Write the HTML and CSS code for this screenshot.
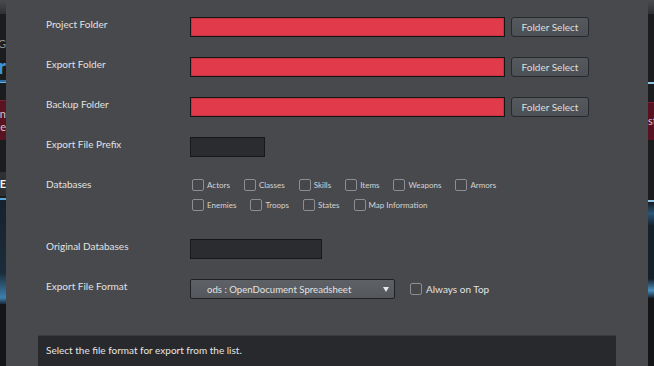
FILE: index.html
```html
<!DOCTYPE html>
<html>
<head>
<meta charset="utf-8">
<link rel="stylesheet" href="styles.css">
</head>
<body>
<div class="screen">
  <div class="side side-left">
    <div class="b b-top"></div>
    <div class="b b-dark h22"></div>
    <div class="b b-dark h16 frag-g"><span>G</span></div>
    <div class="b b-dark h28 frag-blue"><span>r</span></div>
    <div class="b b-line"></div>
    <div class="b b-dark h17"></div>
    <div class="b b-red frag-red"><span>n</span><span>e</span></div>
    <div class="b b-dark h32"></div>
    <div class="b b-gray frag-e"><span>E</span></div>
    <div class="b b-line2"></div>
    <div class="b b-glow"></div>
    <div class="b b-black"></div>
  </div>

  <div class="dialog">
    <div class="row r-folder">
      <div class="label">Project Folder</div>
      <div class="field-red"></div>
      <div class="btn">Folder Select</div>
    </div>
    <div class="row r-folder">
      <div class="label">Export Folder</div>
      <div class="field-red"></div>
      <div class="btn">Folder Select</div>
    </div>
    <div class="row r-folder">
      <div class="label">Backup Folder</div>
      <div class="field-red"></div>
      <div class="btn">Folder Select</div>
    </div>
    <div class="row r-prefix">
      <div class="label">Export File Prefix</div>
      <div class="field-dark w-prefix"></div>
    </div>
    <div class="row r-db">
      <div class="label">Databases</div>
      <div class="checks">
        <div class="check-line">
          <div class="check"><span class="cb"></span><span>Actors</span></div>
          <div class="check"><span class="cb"></span><span>Classes</span></div>
          <div class="check"><span class="cb"></span><span>Skills</span></div>
          <div class="check"><span class="cb"></span><span>Items</span></div>
          <div class="check"><span class="cb"></span><span>Weapons</span></div>
          <div class="check"><span class="cb"></span><span>Armors</span></div>
        </div>
        <div class="check-line">
          <div class="check"><span class="cb"></span><span>Enemies</span></div>
          <div class="check"><span class="cb"></span><span>Troops</span></div>
          <div class="check"><span class="cb"></span><span>States</span></div>
          <div class="check"><span class="cb"></span><span>Map Information</span></div>
        </div>
      </div>
    </div>
    <div class="row r-orig">
      <div class="label">Original Databases</div>
      <div class="field-dark w-orig"></div>
    </div>
    <div class="row r-format">
      <div class="label">Export File Format</div>
      <div class="select">
        <span class="select-text">ods : OpenDocument Spreadsheet</span>
        <span class="arrow"></span>
      </div>
      <div class="check top-check"><span class="cb"></span><span>Always on Top</span></div>
    </div>
    <div class="desc">Select the file format for export from the list.</div>
  </div>

  <div class="side side-right">
    <div class="b b-top"></div>
    <div class="b b-dark h68"></div>
    <div class="b b-line-r"></div>
    <div class="b b-dark h18"></div>
    <div class="b b-red-r frag-st"><span>st</span></div>
    <div class="b b-dark h60"></div>
    <div class="b b-line-r"></div>
    <div class="b b-glow-r"></div>
    <div class="b b-black"></div>
  </div>
</div>
</body>
</html>
```

FILE: styles.css
```css
* { box-sizing: border-box; }
html, body { margin: 0; padding: 0; }
body {
  width: 654px;
  height: 366px;
  overflow: hidden;
  background: #151618;
  font-family: Lato, "Liberation Sans", sans-serif;
  color: #e4e4e4;
}
.screen {
  display: flex;
  width: 654px;
  height: 366px;
}

/* background application strips */
.side {
  width: 6px;
  flex: none;
  display: flex;
  flex-direction: column;
  overflow: hidden;
}
.b { flex: none; overflow: hidden; white-space: nowrap; }
.b-top { height: 14px; background: linear-gradient(#4a4b4e, #2f3032); }
.b-dark { background: #1b1c1e; }
.h16 { height: 16px; }
.h17 { height: 17px; }
.h18 { height: 18px; }
.h22 { height: 22px; }
.h28 { height: 28px; }
.h32 { height: 32px; }
.h60 { height: 60px; }
.h68 { height: 68px; }
.b-line { height: 3px; background: #2f6d9e; border-bottom: 1px solid #62b1ea; }
.b-line2 { height: 4px; background: #1b1c1e; border-bottom: 2px solid #5aa6dc; }
.b-line-r { height: 2px; background: #8cc2e2; }
.b-red { height: 40px; background: #5a1320; border-top: 1px solid #7a2030; }
.b-red-r { height: 38px; background: #561220; border-top: 1px solid #7a2030; }
.b-gray { height: 24px; background: #2e3034; }
.b-glow {
  height: 104px;
  background: linear-gradient(#16222d 0%, #1c2c3a 70%, #3e7fae 94%, #1a2a38 100%);
}
.b-glow-r {
  height: 96px;
  background: linear-gradient(#1a1b1d 0%, #2a5576 12%, #16202a 25%, #16202a 80%, #4a8fbd 92%, #18222c 100%);
}
.b-black { flex: 1; background: #141516; }

.side-left .b { display: flex; flex-direction: column; align-items: flex-end; }
.frag-g span { font-size: 11px; color: #8d8f92; line-height: 16px; }
.frag-blue span { font-size: 20px; color: #3f93d8; line-height: 28px; font-weight: 700; }
.frag-red span { font-size: 11px; color: #d8c4c6; line-height: 13px; }
.frag-red { padding-top: 6px; }
.frag-e span { font-size: 11px; color: #f2f2f2; font-weight: 700; line-height: 24px; }
.frag-st span { font-size: 11px; color: #d8c4c6; line-height: 36px; }

/* dialog */
.dialog {
  width: 642px;
  flex: none;
  background: #47494c;
  padding: 17px 0 0 40px;
  font-size: 10px;
  display: flex;
  flex-direction: column;
}
.row {
  display: flex;
  align-items: flex-start;
  flex: none;
}
.label {
  width: 144px;
  flex: none;
  line-height: 14px;
  color: #e2e2e2;
}
.r-folder, .r-prefix { margin-bottom: 20px; }
.r-db { margin-bottom: 24px; }
.r-orig { margin-bottom: 20px; }
.r-format { margin-bottom: 36px; }

.field-red {
  width: 315px;
  height: 20px;
  background: #e03a4b;
  border: 1px solid #161616;
  box-shadow: inset 0 0 0 1px #c8323f;
}
.btn {
  margin-left: 6px;
  width: 78px;
  height: 20px;
  border: 1px solid #27292b;
  border-radius: 3px;
  background: linear-gradient(#56595d, #4d5054);
  color: #dedede;
  display: flex;
  align-items: center;
  justify-content: center;
  line-height: 1;
}
.field-dark {
  height: 20px;
  background: #2a2c2f;
  border: 1px solid #17181a;
}
.w-prefix { width: 75px; }
.w-orig { width: 132px; }

.checks {
  margin-top: -2px;
  padding-left: 2px;
  display: flex;
  flex-direction: column;
}
.check-line {
  display: flex;
  height: 20px;
  align-items: center;
  gap: 14px;
}
.check {
  display: flex;
  align-items: center;
  gap: 3px;
  font-size: 8px;
  color: #d4d4d4;
}
.cb {
  width: 12px;
  height: 12px;
  flex: none;
  border: 1px solid #8c8e91;
  border-radius: 2px;
  background: #45474a;
}

.select {
  width: 205px;
  height: 20px;
  border: 1px solid #202123;
  border-radius: 2px;
  background: linear-gradient(#5e6165, #54575b);
  display: flex;
  align-items: center;
  padding: 0 5px 0 16px;
  color: #e2e2e2;
  font-size: 9.6px;
}
.select-text { flex: 1; }
.arrow {
  width: 0;
  height: 0;
  border-left: 3px solid transparent;
  border-right: 3px solid transparent;
  border-top: 5px solid #e8e8e8;
}
.top-check {
  margin-left: 15px;
  height: 20px;
  font-size: 10px;
  gap: 4px;
  color: #e2e2e2;
}

.desc {
  margin-left: -8px;
  width: 578px;
  flex: 1;
  background: #27292c;
  border-top: 1px solid #3a3c3f;
  padding: 7px 0 0 8px;
  line-height: 14px;
  color: #e6e6e6;
}
```
